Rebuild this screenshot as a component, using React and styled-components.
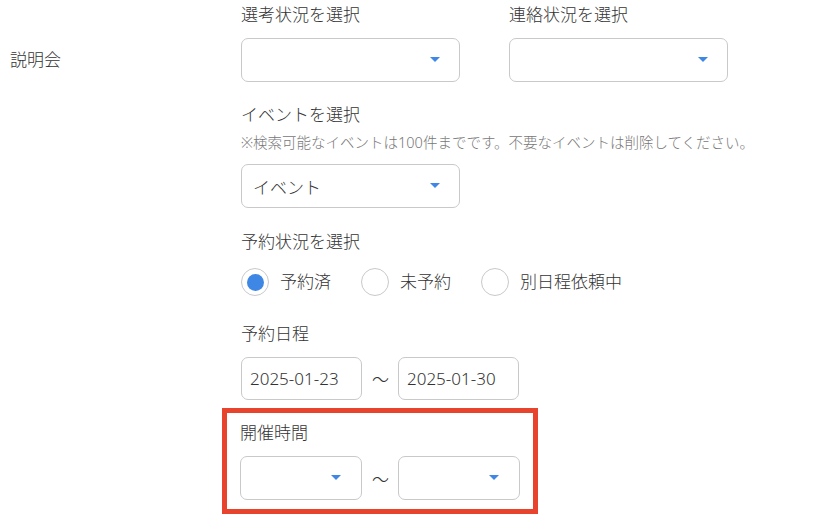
import styled, { createGlobalStyle } from "styled-components";

const COLORS = {
  text: "#333333",
  muted: "#777777",
  border: "#c9c9c9",
  blue: "#3f87e5",
  highlight: "#e8432c",
};

const RADIO_OPTIONS = [
  { id: "reserved", label: "予約済", checked: true },
  { id: "unreserved", label: "未予約", checked: false },
  { id: "other", label: "別日程依頼中", checked: false },
];

const GlobalStyle = createGlobalStyle`
  body {
    margin: 0;
    background: #ffffff;
    font-family: "Noto Sans", "Noto Sans CJK JP", sans-serif;
    font-weight: 300;
    color: ${COLORS.text};
  }
`;

export default function App() {
  return (
    <>
      <GlobalStyle />
      <Page>
        <SideLabel>説明会</SideLabel>
        <Content>
          <FieldRow>
            <FieldGroup>
              <Label>選考状況を選択</Label>
              <Select $width={219} />
            </FieldGroup>
            <FieldGroup>
              <Label>連絡状況を選択</Label>
              <Select $width={219} />
            </FieldGroup>
          </FieldRow>

          <Section $gap={21}>
            <Label>イベントを選択</Label>
            <Note>※検索可能なイベントは100件までです。不要なイベントは削除してください。</Note>
            <Select $width={219} $top={12}>イベント</Select>
          </Section>

          <Section $gap={22}>
            <Label>予約状況を選択</Label>
            <RadioRow>
              {RADIO_OPTIONS.map((option) => (
                <RadioItem key={option.id}>
                  <RadioCircle $checked={option.checked} />
                  <RadioText>{option.label}</RadioText>
                </RadioItem>
              ))}
            </RadioRow>
          </Section>

          <Section $gap={26}>
            <Label>予約日程</Label>
            <RangeRow>
              <DateInput>2025-01-23</DateInput>
              <Tilde>〜</Tilde>
              <DateInput>2025-01-30</DateInput>
            </RangeRow>
          </Section>

          <Highlight>
            <Label>開催時間</Label>
            <RangeRow>
              <Select $width={122} $small />
              <Tilde>〜</Tilde>
              <Select $width={122} $small />
            </RangeRow>
          </Highlight>
        </Content>
      </Page>
    </>
  );
}

const Page = styled.div`
  display: grid;
  grid-template-columns: 241px 1fr;
  width: 834px;
  height: 526px;
  overflow: hidden;
`;

const SideLabel = styled.div`
  padding: 48px 0 0 10px;
  font-size: 17px;
  line-height: 24px;
`;

const Content = styled.div`
  display: flex;
  flex-direction: column;
  align-items: flex-start;
  padding-top: 3px;
`;

const FieldRow = styled.div`
  display: flex;
  gap: 49px;
`;

const FieldGroup = styled.div`
  display: flex;
  flex-direction: column;
`;

const Section = styled.div`
  display: flex;
  flex-direction: column;
  align-items: flex-start;
  margin-top: ${(p) => p.$gap}px;
`;

const Label = styled.div`
  font-size: 17px;
  line-height: 24px;
  margin-bottom: 11px;
  white-space: nowrap;
`;

const Note = styled.div`
  margin: -6px 0 0;
  font-size: 14.5px;
  line-height: 20px;
  color: ${COLORS.muted};
  white-space: nowrap;
`;

const Select = styled.div`
  position: relative;
  box-sizing: border-box;
  width: ${(p) => p.$width}px;
  height: 44px;
  margin-top: ${(p) => p.$top || 0}px;
  padding: 0 36px 0 11px;
  display: flex;
  align-items: center;
  border: 1px solid ${COLORS.border};
  border-radius: 7px;
  background: #ffffff;
  font-size: 17px;

  &::after {
    content: "";
    position: absolute;
    right: ${(p) => (p.$small ? 20 : 19)}px;
    top: 50%;
    margin-top: -3px;
    border-left: 5px solid transparent;
    border-right: 5px solid transparent;
    border-top: 5px solid ${COLORS.blue};
  }
`;

const RadioRow = styled.div`
  display: flex;
  align-items: center;
  gap: 30px;
  margin-top: 3px;
`;

const RadioItem = styled.label`
  display: flex;
  align-items: center;
  gap: 11px;
`;

const RadioCircle = styled.span`
  position: relative;
  box-sizing: border-box;
  width: 28px;
  height: 28px;
  border-radius: 50%;
  border: 1px solid ${COLORS.border};
  background: #ffffff;

  &::after {
    content: "";
    display: ${(p) => (p.$checked ? "block" : "none")};
    position: absolute;
    left: 50%;
    top: 50%;
    width: 17px;
    height: 17px;
    margin: -8.5px 0 0 -8.5px;
    border-radius: 50%;
    background: ${COLORS.blue};
  }
`;

const RadioText = styled.span`
  font-size: 17px;
  line-height: 24px;
`;

const RangeRow = styled.div`
  display: flex;
  align-items: center;
  gap: 10px;
`;

const DateInput = styled.div`
  box-sizing: border-box;
  width: 121px;
  height: 43px;
  padding: 0 8px;
  display: flex;
  align-items: center;
  border: 1px solid ${COLORS.border};
  border-radius: 7px;
  font-size: 17px;
`;

const Tilde = styled.span`
  width: 16px;
  font-size: 17px;
  text-align: center;
`;

const Highlight = styled.div`
  display: flex;
  flex-direction: column;
  margin: 8px 0 0 -19px;
  padding: 8px 13px 9px;
  border: 5px solid ${COLORS.highlight};
`;
